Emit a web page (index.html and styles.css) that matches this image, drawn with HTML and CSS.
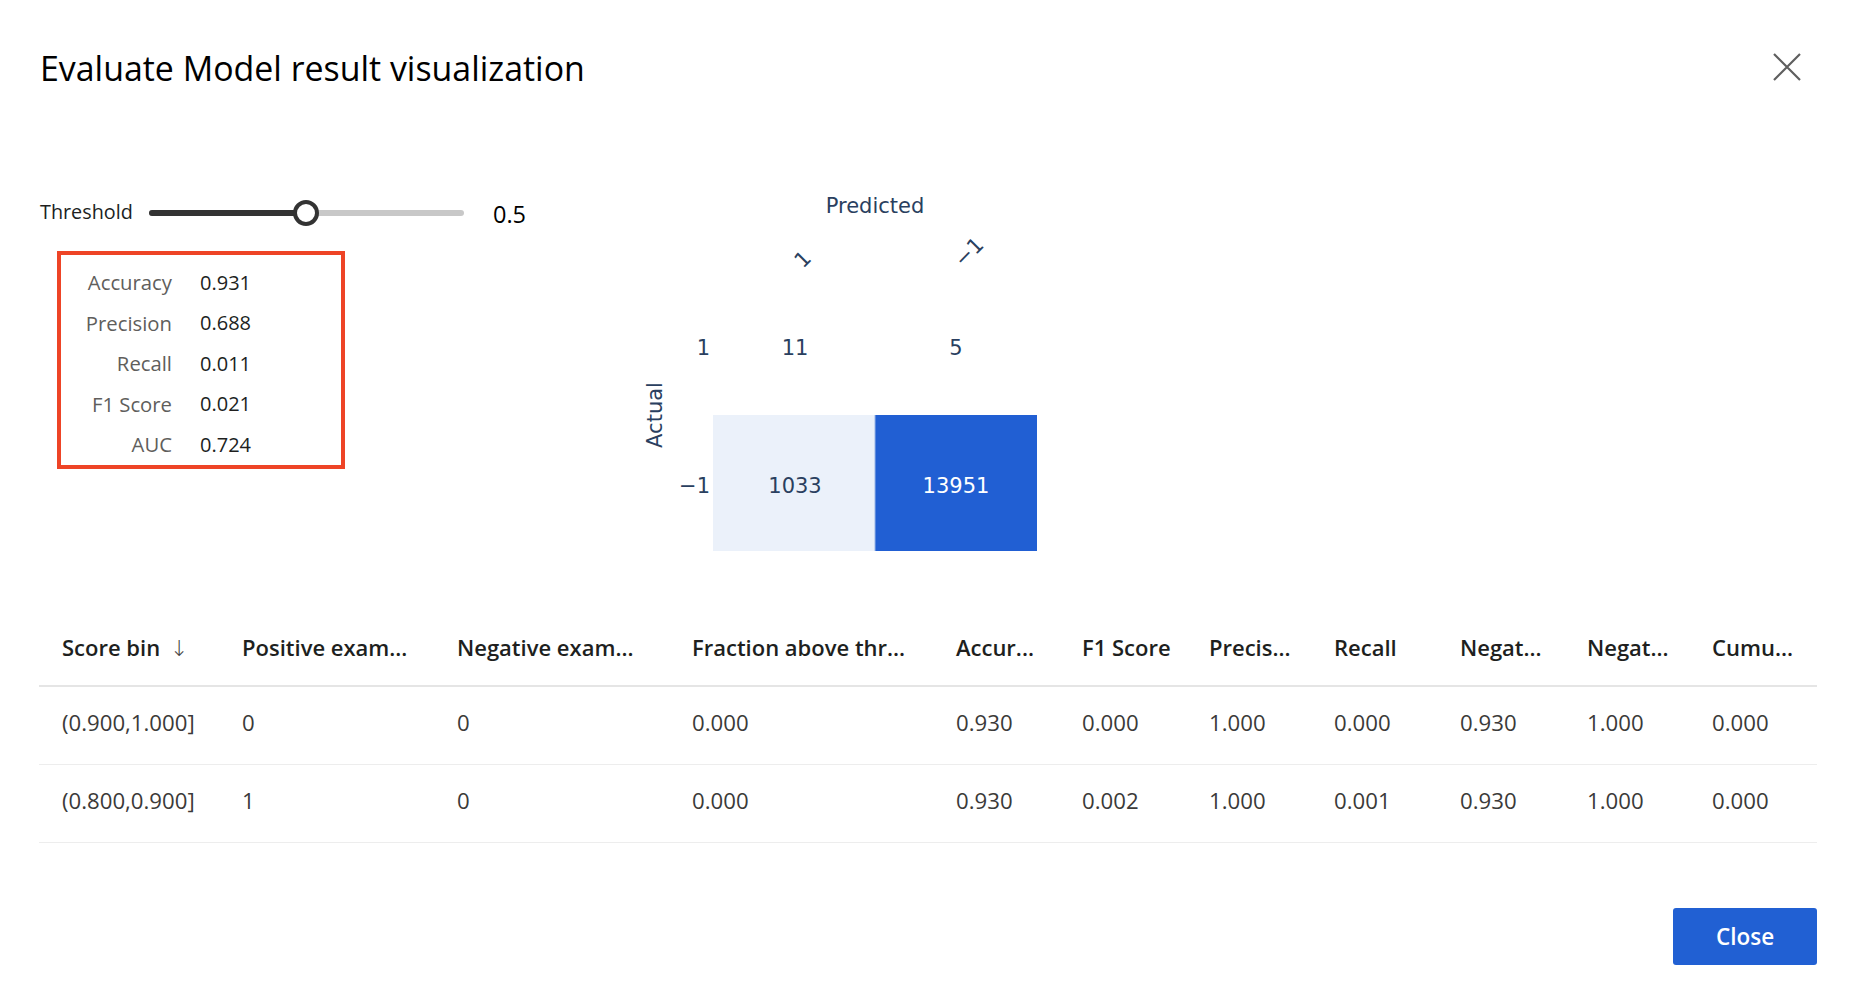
FILE: index.html
```html
<!DOCTYPE html>
<html lang="en">
<head>
<meta charset="utf-8">
<title>Evaluate Model result visualization</title>
<link rel="stylesheet" href="styles.css">
</head>
<body>
<div class="dialog">
  <div class="header">
    <h1 class="title">Evaluate Model result visualization</h1>
    <button class="close-x" aria-label="Close">
      <svg width="28" height="28" viewBox="0 0 28 28"><path d="M1 1 L27 27 M27 1 L1 27" stroke="#5f5f5f" stroke-width="2.2" fill="none"/></svg>
    </button>
  </div>

  <div class="top">
    <div class="left">
      <div class="threshold">
        <span class="th-label">Threshold</span>
        <div class="slider">
          <div class="track"><div class="fill" style="width:157px"></div></div>
          <div class="thumb" style="left:157px"></div>
        </div>
        <span class="th-value">0.5</span>
      </div>
      <div class="metrics">
        <span class="m-label">Accuracy</span><span class="m-value">0.931</span>
        <span class="m-label">Precision</span><span class="m-value">0.688</span>
        <span class="m-label">Recall</span><span class="m-value">0.011</span>
        <span class="m-label">F1 Score</span><span class="m-value">0.021</span>
        <span class="m-label">AUC</span><span class="m-value">0.724</span>
      </div>
    </div>
    <svg class="chart" width="480" height="430" viewBox="0 0 480 430">
      <g font-family="'DejaVu Sans', Verdana, sans-serif" font-size="21" fill="#2a3f5f">
        <text x="275" y="77" text-anchor="middle">Predicted</text>
        <text x="203" y="133" transform="rotate(-45 203 133)">1</text>
        <text x="363" y="132" transform="rotate(-45 363 132)">−1</text>
        <text x="110" y="219" text-anchor="end">1</text>
        <text x="110" y="357" text-anchor="end">−1</text>
        <text x="0" y="0" text-anchor="middle" transform="translate(62 279) rotate(-90)">Actual</text>
        <rect x="113" y="143" width="162" height="136" fill="#ffffff"/>
        <rect x="275" y="143" width="162" height="136" fill="#ffffff"/>
        <rect x="113" y="279" width="162" height="136" fill="#ebf1fa"/>
        <rect x="275" y="279" width="162" height="136" fill="#215fd3"/>
        <line x1="275" y1="279" x2="275" y2="415" stroke="#9ab7e8" stroke-width="1"/>
        <text x="195" y="219" text-anchor="middle">11</text>
        <text x="356" y="219" text-anchor="middle">5</text>
        <text x="195" y="357" text-anchor="middle">1033</text>
        <text x="356" y="357" text-anchor="middle" fill="#ffffff">13951</text>
      </g>
    </svg>
  </div>

  <div class="table">
    <div class="row head">
      <div class="cell">Score bin <span class="arrow">↓</span></div>
      <div class="cell">Positive exam...</div>
      <div class="cell">Negative exam...</div>
      <div class="cell">Fraction above thr...</div>
      <div class="cell">Accur...</div>
      <div class="cell">F1 Score</div>
      <div class="cell">Precis...</div>
      <div class="cell">Recall</div>
      <div class="cell">Negat...</div>
      <div class="cell">Negat...</div>
      <div class="cell">Cumu...</div>
    </div>
    <div class="row">
      <div class="cell">(0.900,1.000]</div>
      <div class="cell">0</div>
      <div class="cell">0</div>
      <div class="cell">0.000</div>
      <div class="cell">0.930</div>
      <div class="cell">0.000</div>
      <div class="cell">1.000</div>
      <div class="cell">0.000</div>
      <div class="cell">0.930</div>
      <div class="cell">1.000</div>
      <div class="cell">0.000</div>
    </div>
    <div class="row">
      <div class="cell">(0.800,0.900]</div>
      <div class="cell">1</div>
      <div class="cell">0</div>
      <div class="cell">0.000</div>
      <div class="cell">0.930</div>
      <div class="cell">0.002</div>
      <div class="cell">1.000</div>
      <div class="cell">0.001</div>
      <div class="cell">0.930</div>
      <div class="cell">1.000</div>
      <div class="cell">0.000</div>
    </div>
  </div>

  <div class="footer">
    <button class="btn-close">Close</button>
  </div>
</div>
</body>
</html>
```

FILE: styles.css
```css
* { box-sizing: border-box; }
html, body { margin: 0; padding: 0; background: #ffffff; }
body {
  font-family: "Open Sans", "Noto Sans", "Liberation Sans", sans-serif;
  color: #201f1e;
  width: 1858px;
  height: 1007px;
  overflow: hidden;
}
.dialog {
  padding: 0 41px 0 39px;
}
.header {
  height: 136px;
  display: flex;
  align-items: center;
  justify-content: space-between;
}
.title {
  margin: 0 0 0 1px;
  font-size: 33.9px;
  font-weight: 400;
  color: #000000;
}
.close-x {
  border: 0;
  background: transparent;
  padding: 0;
  margin: 0 16px 2px 0;
  width: 28px;
  height: 28px;
  display: flex;
}
.top {
  display: flex;
  align-items: flex-start;
}
.left {
  width: 561px;
  padding-top: 55px;
}
.threshold {
  display: flex;
  align-items: center;
  height: 40px;
  padding-left: 1px;
}
.th-label {
  font-size: 19.8px;
  color: #201f1e;
  width: 109px;
}
.slider {
  position: relative;
  width: 315px;
  height: 26px;
  display: flex;
  align-items: center;
  margin-top: 4px;
}
.track {
  width: 100%;
  height: 6px;
  border-radius: 3px;
  background: #c8c8c8;
  overflow: hidden;
}
.fill {
  height: 100%;
  background: #333333;
}
.thumb {
  position: absolute;
  top: 0;
  width: 26px;
  height: 26px;
  margin-left: -13px;
  border-radius: 50%;
  background: #ffffff;
  border: 4px solid #333333;
}
.th-value {
  margin-left: 29px;
  font-size: 23.5px;
  color: #000000;
  margin-top: 6px;
}
.metrics {
  margin: 20px 0 0 18px;
  width: 288px;
  height: 218px;
  border: 4px solid #ee4426;
  padding-top: 7px;
  display: grid;
  grid-template-columns: 111px auto;
  grid-auto-rows: 40.5px;
  column-gap: 28px;
  align-items: center;
}
.m-label {
  text-align: right;
  font-size: 20.3px;
  color: #605e5c;
}
.m-value {
  font-size: 20px;
  color: #201f1e;
}
.chart {
  display: block;
}
.table {
  margin-top: 43px;
}
.row {
  display: grid;
  grid-template-columns: 180px 215px 235px 264px 126px 127px 125px 126px 127px 125px 1fr;
  height: 78px;
  align-items: center;
  border-bottom: 1px solid #ededed;
  padding-bottom: 6px;
}
.row.head {
  border-bottom: 2px solid #e5e5e5;
  padding-bottom: 0;
  height: 78px;
}
.cell {
  padding-left: 23px;
  white-space: nowrap;
  overflow: hidden;
  font-size: 22.2px;
  color: #3b3a39;
}
.head .cell {
  font-weight: 600;
  color: #201f1e;
  font-size: 22px;
}
.arrow {
  font-weight: 300;
  font-family: "DejaVu Sans", sans-serif;
  font-size: 22px;
  color: #444;
  margin-left: 4px;
}
.footer {
  display: flex;
  justify-content: flex-end;
  margin-top: 65px;
}
.btn-close {
  width: 144px;
  height: 57px;
  border: 0;
  border-radius: 3px;
  background: #2160d3;
  color: #ffffff;
  font-family: "Open Sans", "Noto Sans", sans-serif;
  font-size: 22.5px;
  font-weight: 600;
  padding: 0;
}
```
